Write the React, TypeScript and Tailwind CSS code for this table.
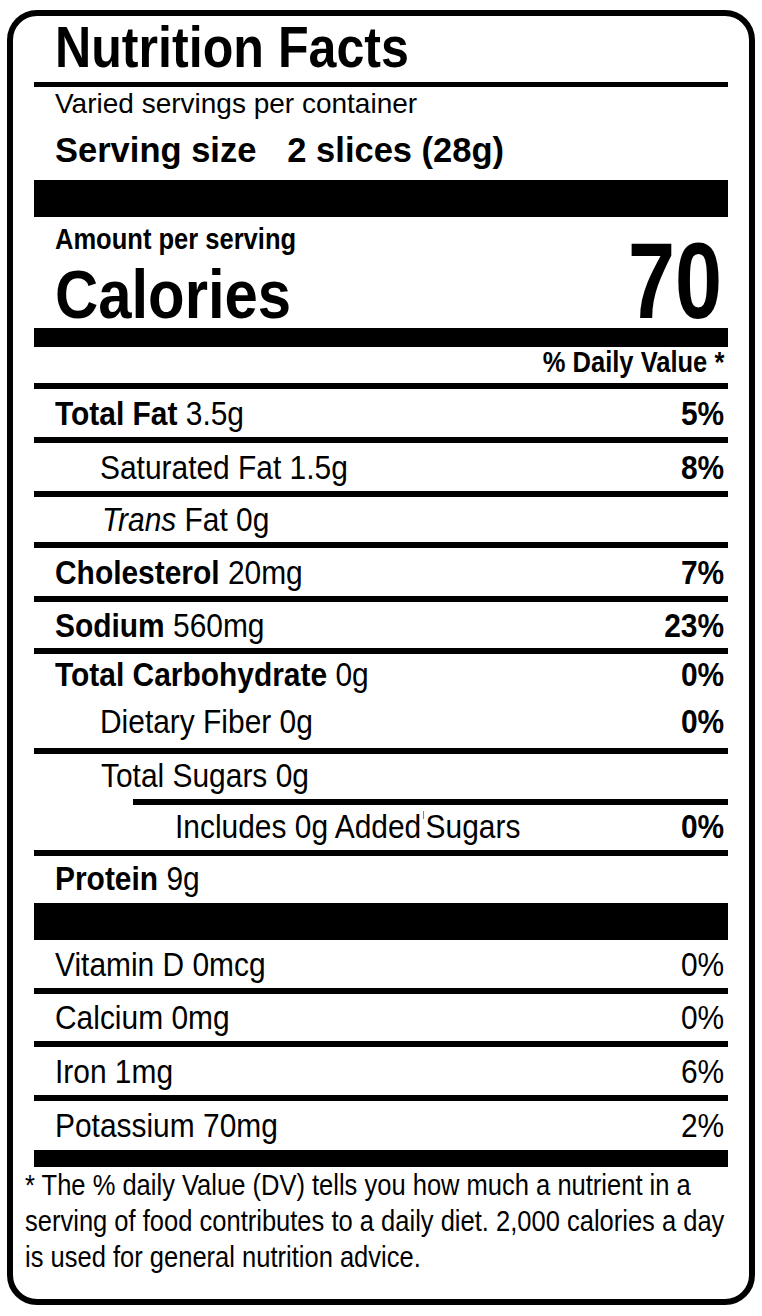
import type { ReactNode } from "react";

const cond = "inline-block whitespace-nowrap origin-left scale-x-[0.88]";
const condR = "inline-block whitespace-nowrap origin-right scale-x-[0.88]";

const Rule = () => <div className="h-[6px] bg-black" />;

type RowProps = {
  size: string;
  indent?: string;
  left: ReactNode;
  right?: ReactNode;
  boldRight?: boolean;
};

const Row = ({ size, indent = "pl-[21px]", left, right, boldRight = true }: RowProps) => (
  <div className={`flex justify-between pr-[4px] text-[34px] ${size} ${indent}`}>
    <span className={cond}>{left}</span>
    {right && <span className={`${condR} ${boldRight ? "font-bold" : ""}`}>{right}</span>}
  </div>
);

export default function App() {
  return (
    <div className="min-h-screen overflow-hidden bg-white pl-[7px] pt-[10px] font-['Liberation_Sans',Arial,sans-serif] text-black">
      <div className="h-[1295px] w-[748px] overflow-hidden rounded-[30px] border-[6px] border-black px-[21px]">
        {/* Header */}
        <div className="h-[66px] pl-[21px] text-[57px] font-bold leading-[63px]">
          <span className={cond}>Nutrition Facts</span>
        </div>
        <div className="h-[5px] bg-black" />
        <div className="h-[34px] pl-[21px] text-[28px] leading-[34px]">Varied servings per container</div>
        <div className="flex h-[59px] pl-[21px] text-[34.5px] font-bold leading-[58px]">
          <span>Serving size</span>
          <span className="ml-[31px]">2 slices (28g)</span>
        </div>
        <div className="h-[37px] bg-black" />

        {/* Calories */}
        <div className="flex h-[111px] justify-between pl-[21px] pr-[6px]">
          <div className="flex flex-col">
            <div className="h-[44px] text-[29px] font-bold leading-[44px]">
              <span className={cond}>Amount per serving</span>
            </div>
            <div className="h-[67px] text-[68px] font-bold leading-[67px]">
              <span className={cond}>Calories</span>
            </div>
          </div>
          <div className="self-end text-[107px] font-bold leading-[94px]">
            <span className="inline-block origin-right scale-x-[0.79]">70</span>
          </div>
        </div>
        <div className="h-[19px] bg-black" />
        <div className="h-[36px] pr-[4px] text-right text-[29px] font-bold leading-[30px]">
          <span className={condR}>% Daily Value *</span>
        </div>
        <Rule />

        <Row size="h-[48px] leading-[48px]" left={<><b>Total Fat</b> 3.5g</>} right="5%" />
        <Rule />
        <Row size="h-[48px] leading-[48px]" indent="pl-[66px]" left="Saturated Fat 1.5g" right="8%" />
        <Rule />
        <Row size="h-[45px] leading-[45px]" indent="pl-[68px]" left={<><i>Trans</i> Fat 0g</>} />
        <Rule />
        <Row size="h-[48px] leading-[48px]" left={<><b>Cholesterol</b> 20mg</>} right="7%" />
        <Rule />
        <Row size="h-[46px] leading-[46px]" left={<><b>Sodium</b> 560mg</>} right="23%" />
        <Rule />
        <Row size="h-[40px] leading-[40px]" left={<><b>Total Carbohydrate</b> 0g</>} right="0%" />
        <Row size="h-[54px] leading-[54px]" indent="pl-[66px]" left="Dietary Fiber 0g" right="0%" />
        <Rule />
        <Row size="h-[45px] leading-[42px]" indent="pl-[67px]" left="Total Sugars 0g" />
        <div className="ml-[99px] h-[6px] bg-black" />
        <Row
          size="h-[45px] leading-[42px]"
          indent="pl-[141px]"
          left={
            <>
              Includes 0g Added
              <span className="mx-[2px] inline-block h-[8px] w-px -translate-y-[14px] bg-gray-500 align-middle" />
              Sugars
            </>
          }
          right="0%"
        />
        <Rule />
        <Row size="h-[47px] leading-[45px]" left={<><b>Protein</b> 9g</>} />
        <div className="h-[37px] bg-black" />

        {/* Vitamins & minerals */}
        <Row size="h-[48px] leading-[48px]" left="Vitamin D 0mcg" right="0%" boldRight={false} />
        <Rule />
        <Row size="h-[47px] leading-[47px]" left="Calcium 0mg" right="0%" boldRight={false} />
        <Rule />
        <Row size="h-[48px] leading-[48px]" left="Iron 1mg" right="6%" boldRight={false} />
        <Rule />
        <Row size="h-[49px] leading-[49px]" left="Potassium 70mg" right="2%" boldRight={false} />
        <div className="h-[17px] bg-black" />

        {/* Footnote */}
        <div className="-ml-[9px] text-[29px] leading-[36px]">
          <span className={cond}>* The % daily Value (DV) tells you how much a nutrient in a</span>
          <br />
          <span className={cond}>serving of food contributes to a daily diet. 2,000 calories a day</span>
          <br />
          <span className={cond}>is used for general nutrition advice.</span>
        </div>
      </div>
    </div>
  );
}
